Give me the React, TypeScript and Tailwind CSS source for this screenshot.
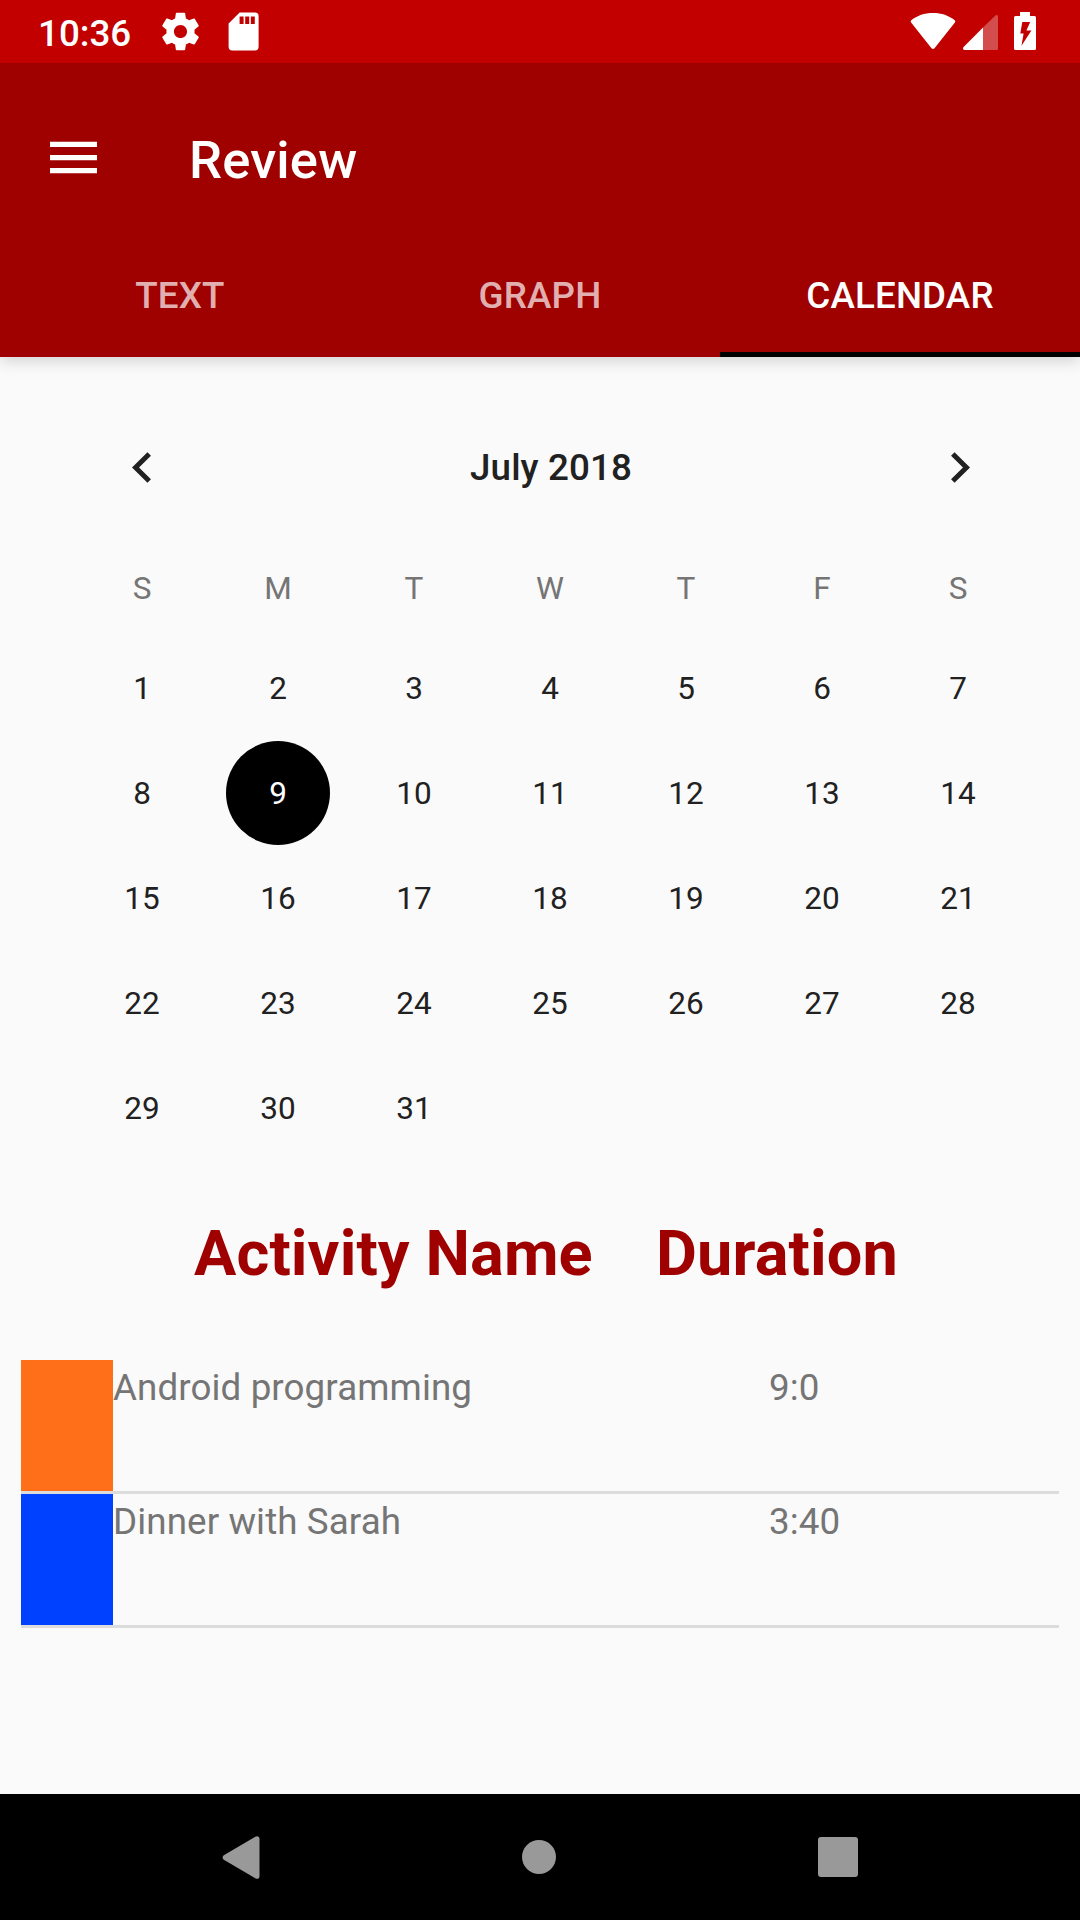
import React from "react";

const WEEKDAYS = ["S", "M", "T", "W", "T", "F", "S"];
const DAYS = Array.from({ length: 31 }, (_, i) => i + 1);
const SELECTED_DAY = 9;

const TABS = [
  { label: "TEXT", active: false },
  { label: "GRAPH", active: false },
  { label: "CALENDAR", active: true },
];

const ACTIVITIES = [
  { name: "Android programming", duration: "9:0", color: "bg-[#ff6f1a]" },
  { name: "Dinner with Sarah", duration: "3:40", color: "bg-[#0040ff]" },
];

function StatusBar() {
  return (
    <div className="relative z-20 flex h-[63px] items-start bg-[#c20000] text-white">
      <div className="w-[120px] pl-[38px] pt-[12px] text-[36.75px] leading-[43px] font-medium">10:36</div>
      <svg className="ml-[38px] mt-[9px] h-[45px] w-[45px]" viewBox="0 0 24 24" fill="currentColor">
        <path d="M19.43 12.98c.04-.32.07-.64.07-.98s-.03-.66-.07-.98l2.11-1.65c.19-.15.24-.42.12-.64l-2-3.46c-.12-.22-.39-.3-.61-.22l-2.49 1c-.52-.4-1.08-.73-1.69-.98l-.38-2.65C14.46 2.18 14.25 2 14 2h-4c-.25 0-.46.18-.49.42l-.38 2.65c-.61.25-1.17.59-1.69.98l-2.49-1c-.23-.09-.49 0-.61.22l-2 3.46c-.13.22-.07.49.12.64l2.11 1.65c-.04.32-.07.65-.07.98s.03.66.07.98l-2.11 1.65c-.19.15-.24.42-.12.64l2 3.46c.12.22.39.3.61.22l2.49-1c.52.4 1.08.73 1.69.98l.38 2.65c.03.24.24.42.49.42h4c.25 0 .46-.18.49-.42l.38-2.65c.61-.25 1.17-.59 1.69-.98l2.49 1c.23.09.49 0 .61-.22l2-3.46c.12-.22.07-.49-.12-.64l-2.11-1.65zM12 15.5c-1.93 0-3.5-1.57-3.5-3.5s1.57-3.5 3.5-3.5 3.5 1.57 3.5 3.5-1.57 3.5-3.5 3.5z" />
      </svg>
      <svg className="ml-[25px] mt-[12px] h-[39px] w-[31px]" viewBox="0 0 31 39" fill="currentColor" fillRule="evenodd">
        <path d="M11.6.6H27a3.6 3.6 0 0 1 3.6 3.6v30.6a3.6 3.6 0 0 1-3.6 3.6H4.200a3.600 3.600 0 0 1-3.600-3.600V11.600ZM11.600 4.500v7.600h4V4.500ZM17.200 4.500v7.600h4V4.500ZM22.800 4.500v7.600h4V4.500Z" />
      </svg>
      <svg className="ml-auto mt-[12px] h-[39px] w-[46px]" viewBox="0 0 46 39" fill="currentColor">
        <path d="M1.300 8.300C7 3.500 14.500 1 23 1s16 2.500 21.700 7.300c.7.600.8 1.500.2 2.200L24.500 36.200c-.8 1-2.200 1-3 0L1.100 10.500c-.6-.7-.5-1.600.2-2.200Z" />
      </svg>
      <svg className="ml-[7px] mt-[14px] h-[37px] w-[35px]" viewBox="0 0 35 37" fill="currentColor">
        <path opacity=".3" d="M20 13.500V36h13.500a1.500 1.500 0 0 0 1.500-1.500V2.500c0-1.600-1.500-2-2.500-1Z" />
        <path d="M20 13.500.6 33c-1.200 1.300-.5 3 1.200 3H20Z" />
      </svg>
      <svg className="ml-[16px] mr-[44px] mt-[12px] h-[38px] w-[22px]" viewBox="0 0 22 38" fill="currentColor" fillRule="evenodd">
        <path d="M6 0h10v4h4.500A1.500 1.500 0 0 1 22 5.500v31a1.500 1.500 0 0 1-1.500 1.500h-19A1.500 1.500 0 0 1 0 36.500v-31A1.500 1.500 0 0 1 1.500 4H6ZM8.300 10 6.300 21.600h3.300L7.500 33.700 17.400 18.600h-5L16.200 10Z" />
      </svg>
    </div>
  );
}

function AppBar() {
  return (
    <header className="relative z-10 h-[294px] bg-[#9f0000] pt-[21px] text-white shadow-[0_4px_14px_rgba(0,0,0,0.16)]">
      <div className="flex h-[147px] items-center pl-[50px]">
        <svg className="h-[33px] w-[47px]" viewBox="0 0 47 33" fill="currentColor">
          <path d="M0 .7h47v5.300H0ZM0 14h47v5.300H0ZM0 27h47v5.300H0Z" />
        </svg>
        <h1 className="ml-[92px] pt-[4px] text-[52.5px] leading-[62px] font-medium tracking-[0.15px]">Review</h1>
      </div>
      <nav className="grid h-[126px] grid-cols-3">
        {TABS.map((tab) => (
          <div
            key={tab.label}
            className={
              tab.active
                ? "flex items-center justify-center border-b-[5px] border-black pt-[8px] text-[36.75px] font-medium tracking-[0.15px]"
                : "flex items-center justify-center border-b-[5px] border-transparent pt-[8px] text-[36.75px] font-medium tracking-[0.15px] text-white/70"
            }
          >
            {tab.label}
          </div>
        ))}
      </nav>
    </header>
  );
}

function Calendar() {
  return (
    <section className="ml-[74px] w-[952px] pt-[58px] text-[#212121]">
      <div className="flex h-[105px] items-center justify-between px-[58px]">
        <svg className="h-[31px] w-[19px]" viewBox="0 0 19 31" fill="none" stroke="currentColor" strokeWidth="5">
          <path d="M17.200 2 3.500 15.500 17.200 29" />
        </svg>
        <div className="text-[36.75px] font-medium tracking-[0.1px]">July 2018</div>
        <svg className="mr-[-2px] h-[31px] w-[19px]" viewBox="0 0 19 31" fill="none" stroke="currentColor" strokeWidth="5">
          <path d="M1.800 2 15.500 15.500 1.800 29" />
        </svg>
      </div>
      <div className="mt-[42px] grid h-[52px] grid-cols-7 text-[31.5px] text-[#757575]">
        {WEEKDAYS.map((d, i) => (
          <div key={i} className="flex items-center justify-center pt-[2px]">
            {d}
          </div>
        ))}
      </div>
      <div className="mt-[21.5px] grid auto-rows-[105px] grid-cols-7 text-[31.5px]">
        {DAYS.map((day) =>
          day === SELECTED_DAY ? (
            <div key={day} className="flex items-center justify-center">
              <span className="flex size-[104px] items-center justify-center rounded-full bg-black pt-px text-white">{day}</span>
            </div>
          ) : (
            <div key={day} className="flex items-center justify-center pt-px">
              {day}
            </div>
          ),
        )}
      </div>
    </section>
  );
}

function ActivityList() {
  return (
    <section className="px-[21px]">
      <div className="flex h-[74px] pl-[173px] text-[63px] leading-[74px] font-bold tracking-[0.12px] text-[#9f0000]">
        <div className="w-[462px] whitespace-nowrap">Activity Name</div>
        <div>Duration</div>
      </div>
      <div className="mt-[69px]">
        {ACTIVITIES.map((a) => (
          <div
            key={a.name}
            className="flex h-[134px] border-b-[3px] border-[#dcdcdc] text-[36.75px] leading-[43px] tracking-[0.1px] text-[#757575]"
          >
            <div className={`w-[92px] ${a.color}`} />
            <div className="w-[656px] pt-[6px]">{a.name}</div>
            <div className="pt-[6px]">{a.duration}</div>
          </div>
        ))}
      </div>
    </section>
  );
}

function NavigationBar() {
  return (
    <div className="mt-auto flex h-[126px] items-center bg-black pl-[222px] text-[#999999]">
      <svg className="h-[43px] w-[38px]" viewBox="0 0 38 43" fill="currentColor">
        <path d="M1.800 19.300 33.300.7c2-1.200 4.200-.2 4.200 2.100v37.400c0 2.300-2.200 3.300-4.200 2.100L1.800 23.700C.2 22.700.2 20.300 1.800 19.300Z" />
      </svg>
      <div className="ml-[262px] size-[34px] rounded-full bg-[#999999]" />
      <div className="ml-[262px] size-[40px] rounded-[3px] bg-[#999999]" />
    </div>
  );
}

export default function App() {
  return (
    <div className="flex h-[1920px] w-[1080px] flex-col overflow-hidden bg-[#fafafa] font-['Roboto',sans-serif]">
      <StatusBar />
      <AppBar />
      <Calendar />
      <div className="mt-[56.5px]">
        <ActivityList />
      </div>
      <NavigationBar />
    </div>
  );
}
